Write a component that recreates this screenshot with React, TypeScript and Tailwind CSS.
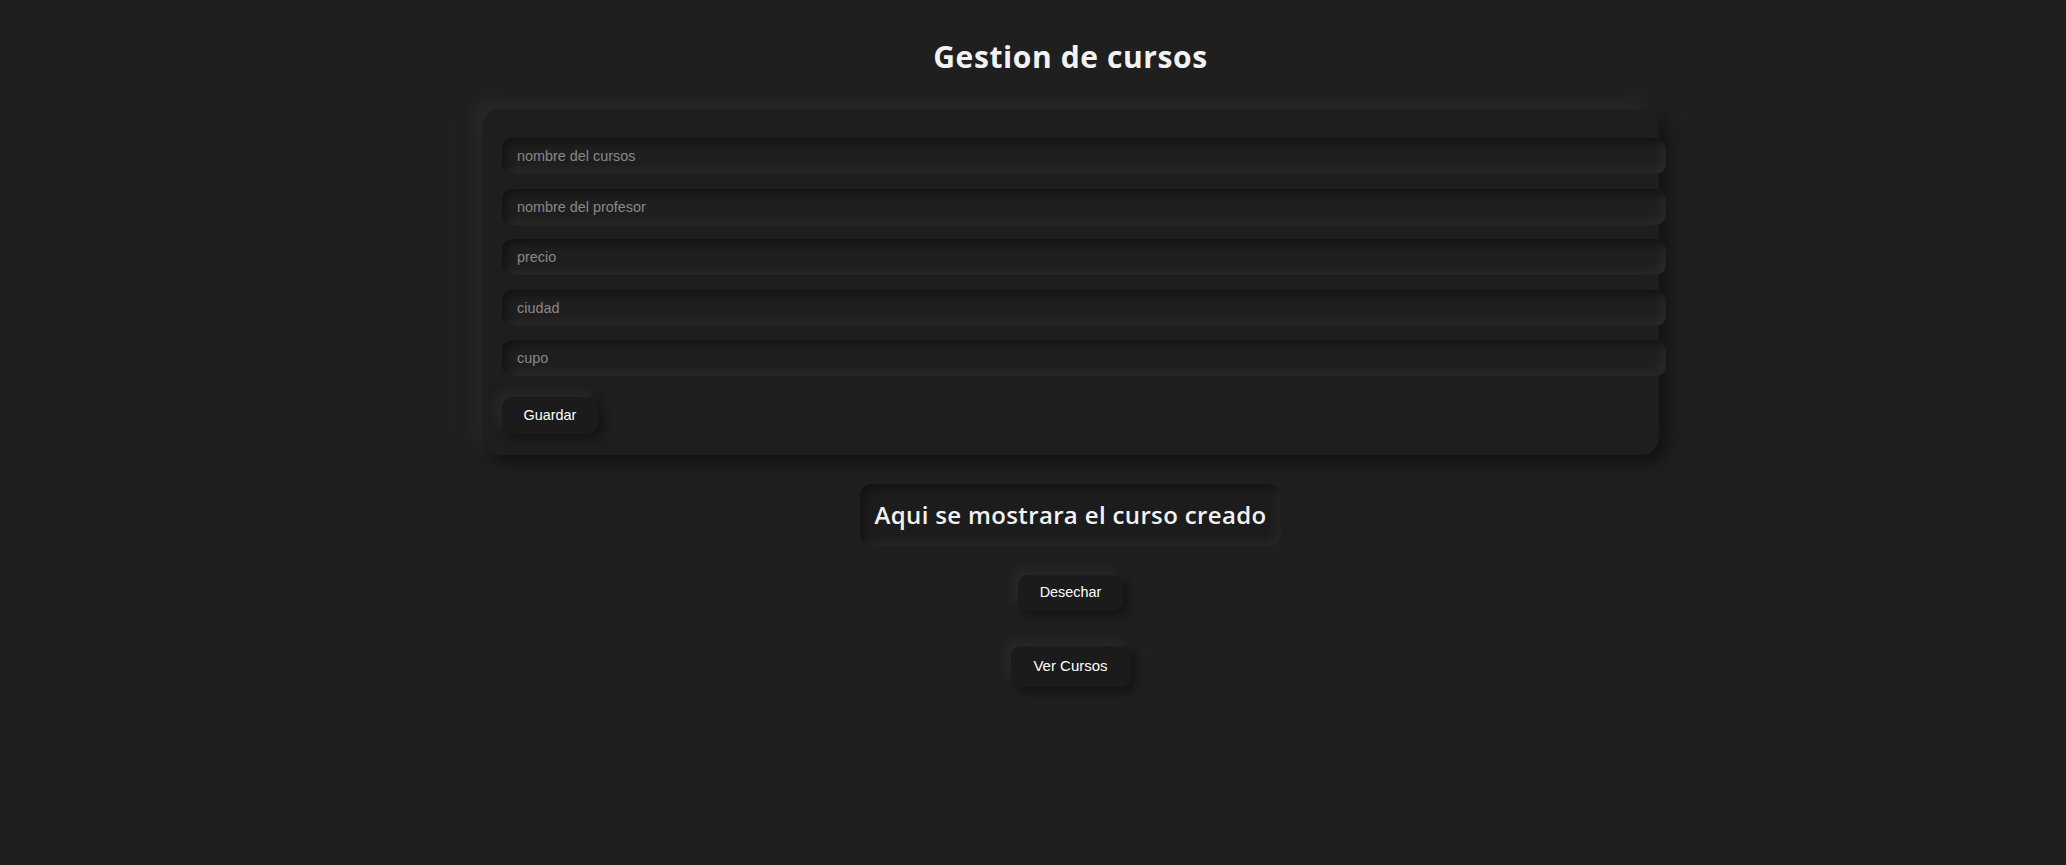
import React from "react";

const fields = ["nombre del cursos", "nombre del profesor", "precio", "ciudad", "cupo"];

export default function App() {
  return (
    <div className="min-h-screen w-full bg-[#1f1f1f] pl-[75px] flex flex-col items-center font-['Liberation_Sans',Arial,sans-serif]">
      <h1 className="mt-[37px] text-[30px] leading-[40px] font-bold tracking-[0.6px] text-[#f2f2f2] font-['Open_Sans',sans-serif]">
        Gestion de cursos
      </h1>
      <form
        className="mt-[32px] w-[1177px] rounded-[18px] bg-[#1e1e1e] px-[20px] pt-[29px] pb-[21px] flex flex-col gap-[14.5px] shadow-[8px_8px_16px_#131313,-8px_-8px_16px_#2a2a2a]"
        onSubmit={(e) => e.preventDefault()}
      >
        {fields.map((f) => (
          <input
            key={f}
            placeholder={f}
            className="w-[1164px] h-[36px] shrink-0 rounded-[10px] bg-[#1f1f1f] pl-[15px] text-[14.4px] text-[#ddd] placeholder:text-[#8a8784] outline-none shadow-[inset_4px_4px_8px_#131313,inset_-4px_-4px_8px_#2c2c2c]"
          />
        ))}
        <button
          type="button"
          className="mt-[6.5px] self-start w-[96px] h-[37px] rounded-[10px] bg-[#1b1b1b] text-[14.4px] text-white shadow-[5px_5px_10px_#141414,-5px_-5px_10px_#2a2a2a]"
        >
          Guardar
        </button>
      </form>
      <div className="mt-[29px] h-[62px] px-[15px] rounded-[12px] bg-[#1c1c1c] flex items-center shadow-[inset_4px_4px_8px_#141414,inset_-4px_-4px_8px_#2a2a2a]">
        <h2 className="text-[24px] leading-[32px] font-semibold tracking-[0.35px] text-[#f2f2f2] font-['Open_Sans',sans-serif]">
          Aqui se mostrara el curso creado
        </h2>
      </div>
      <button
        type="button"
        className="mt-[29px] w-[105px] h-[36px] rounded-[10px] bg-[#1b1b1b] text-[14.4px] text-white shadow-[5px_5px_10px_#141414,-5px_-5px_10px_#2a2a2a]"
      >
        Desechar
      </button>
      <button
        type="button"
        className="mt-[35px] w-[120px] h-[41px] rounded-[10px] bg-[#1b1b1b] text-[15px] text-white shadow-[5px_5px_10px_#141414,-5px_-5px_10px_#2a2a2a]"
      >
        Ver Cursos
      </button>
    </div>
  );
}
